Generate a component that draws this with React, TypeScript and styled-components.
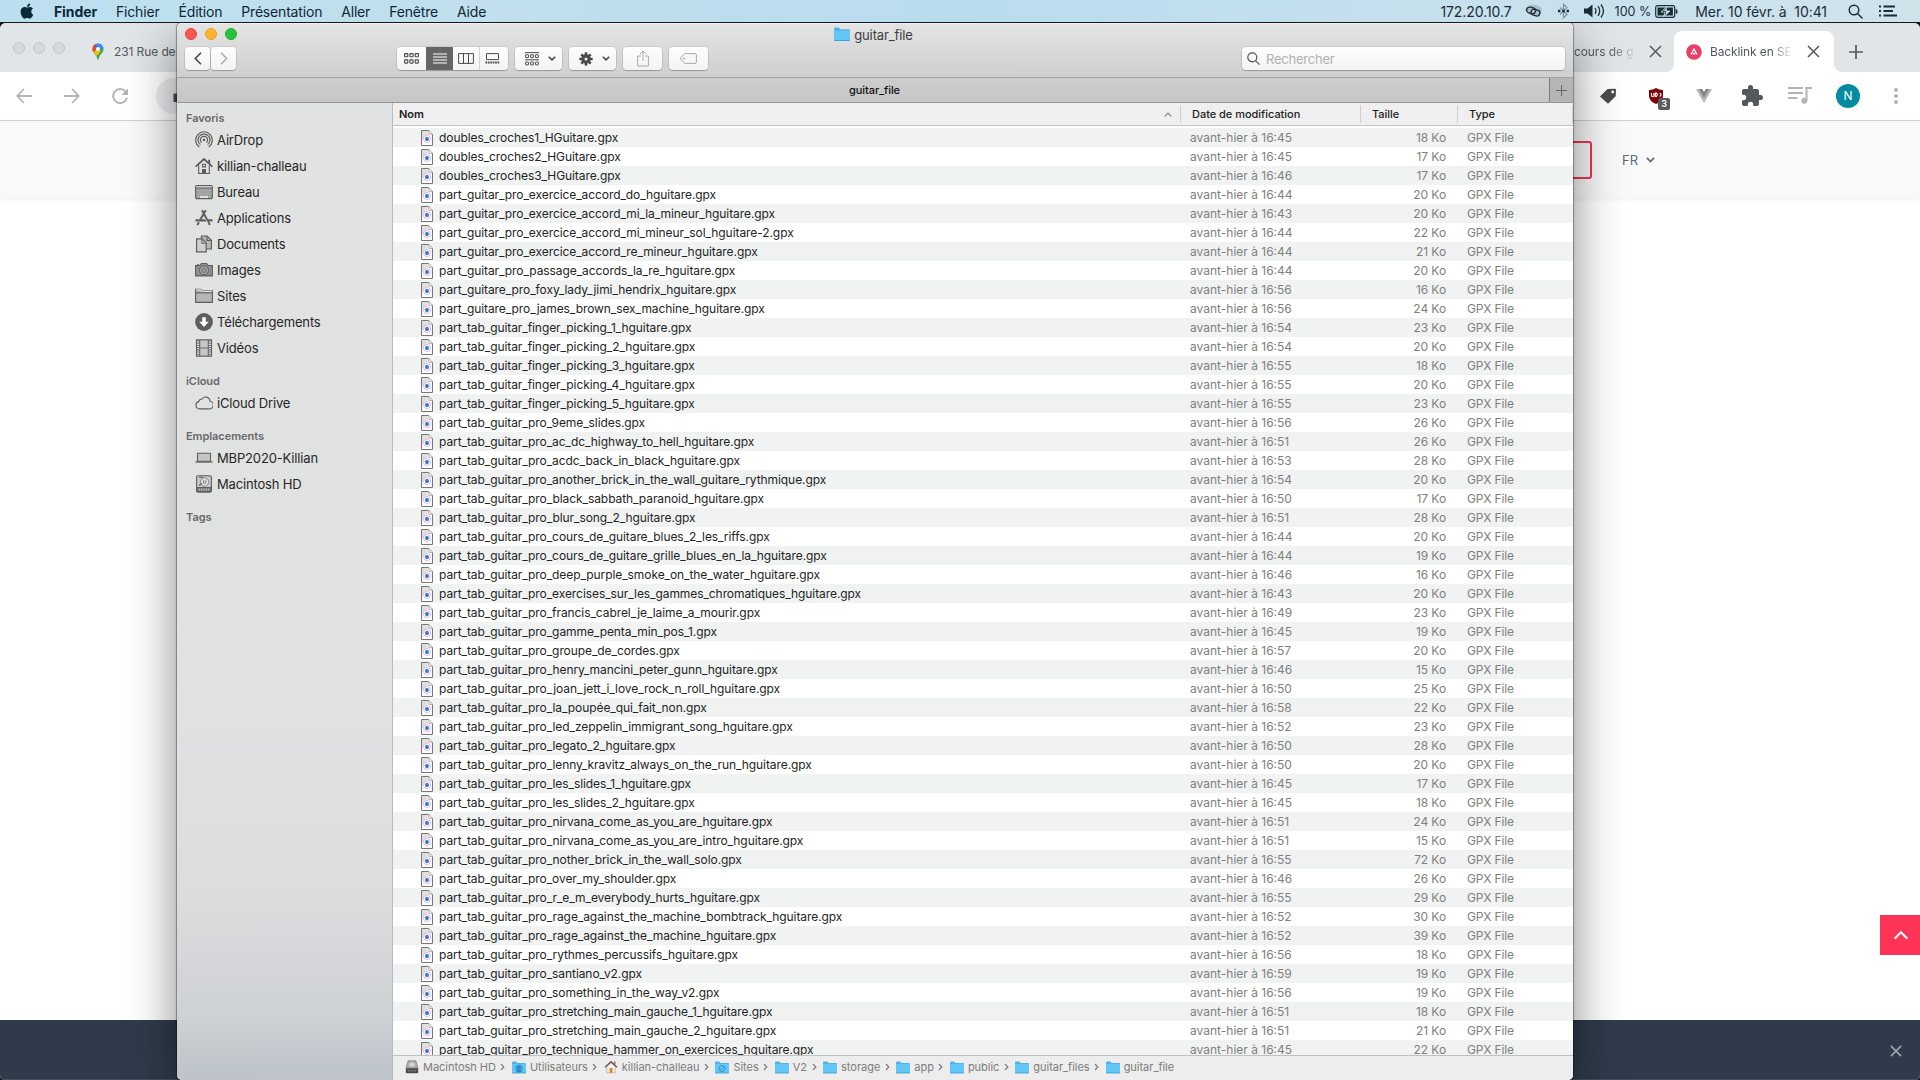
import React from "react";
import styled, { createGlobalStyle, css } from "styled-components";

const Global = createGlobalStyle`
  * { box-sizing: border-box; }
  html, body { margin: 0; padding: 0; background: #15181c; }
  body { font-family: Inter, "Liberation Sans", sans-serif; overflow: hidden; }
  svg { display: block; flex: none; }
`;

const Desktop = styled.div`
  position: relative;
  display: flex;
  flex-direction: column;
  width: 1920px;
  height: 1080px;
  overflow: hidden;
  background: #15181c;
`;

/* ---------- macOS menu bar ---------- */

const MenuBar = styled.header`
  display: flex;
  flex: none;
  align-items: center;
  justify-content: space-between;
  height: 22px;
  padding: 0 23px 0 20px;
  background: linear-gradient(90deg, #bcdfef 0%, #c1dfec 25%, #b9dcef 50%, #c6e0ed 75%, #cfe3eb 100%);
  color: #0c2836;
  font-size: 14px;
  white-space: pre;
`;

const MenuGroup = styled.div`
  display: flex;
  align-items: center;
  height: 22px;
  gap: 19px;
`;

const MenuItem = styled.span<{ $bold?: boolean }>`
  margin-left: ${(p) => (p.$bold ? 1 : 0)}px;
  font-weight: ${(p) => (p.$bold ? 700 : 400)};
  letter-spacing: ${(p) => (p.$bold ? -0.1 : -0.18)}px;
`;

const StatusGroup = styled(MenuGroup)`
  gap: 0;
  color: #1a2c36;
`;

const Status = styled.span<{ $after: number; $small?: boolean }>`
  margin-right: ${(p) => p.$after}px;
  font-size: ${(p) => (p.$small ? 12.5 : 14)}px;
  letter-spacing: ${(p) => (p.$small ? 0 : -0.07)}px;
`;

/* ---------- browser behind ---------- */

const Browser = styled.div`
  display: flex;
  flex-direction: column;
  flex: 1;
  margin-top: 1px;
  border-radius: 6px 6px 5px 5px;
  overflow: hidden;
  isolation: isolate;
  background: #fff;
`;

const TabStrip = styled.div`
  display: flex;
  flex: none;
  justify-content: space-between;
  height: 49px;
  background: #e1e5e8;
  color: #54595e;
  font-size: 12px;
`;

const TabSide = styled.div`
  display: flex;
  align-items: center;
`;

const Lights = styled.div<{ $gap: number }>`
  display: flex;
  gap: ${(p) => p.$gap}px;
`;

const Light = styled.i<{ $fill: string; $edge: string }>`
  width: 12px;
  height: 12px;
  border-radius: 50%;
  background: ${(p) => p.$fill};
  border: 1px solid ${(p) => p.$edge};
`;

const BrowserLights = styled(Lights)`
  margin: 0 27px 0 13px;
`;

const TabText = styled.span<{ $w: number; $fade?: boolean }>`
  width: ${(p) => p.$w}px;
  overflow: hidden;
  white-space: nowrap;
  padding-top: 8px;
  line-height: 20px;
  letter-spacing: -0.1px;
  ${(p) => p.$fade && css`mask-image: linear-gradient(90deg, #000 60%, transparent 103%);`}
`;

const LowIcon = styled.div<{ $l?: number; $r?: number }>`
  margin: 8px ${(p) => p.$r ?? 0}px 0 ${(p) => p.$l ?? 0}px;
`;

const ActiveTab = styled.div`
  display: flex;
  align-items: center;
  align-self: flex-end;
  width: 160px;
  height: 41px;
  padding: 0 14px 0 12px;
  border-radius: 8px 8px 0 0;
  background: #fff;
`;

const Foot = styled.div<{ $left?: boolean }>`
  align-self: flex-end;
  width: 8px;
  height: 8px;
  background: radial-gradient(circle at ${(p) => (p.$left ? "0 0" : "100% 0")}, #e1e5e8 7.6px, #fff 8.2px);
`;

const TabLabel = styled.span`
  width: 83px;
  margin: 0 15px 0 8px;
  overflow: hidden;
  white-space: nowrap;
  letter-spacing: -0.12px;
  mask-image: linear-gradient(90deg, #000 75%, transparent 101%);
`;

const NavBar = styled.div`
  display: flex;
  flex: none;
  align-items: center;
  justify-content: space-between;
  height: 49px;
  border-bottom: 1px solid #d3d5d7;
  background: #fff;
  color: #b4b4b4;
`;

const NavLeft = styled.div`
  display: flex;
  align-items: center;
  gap: 32px;
  padding-left: 16px;
`;

const AddressField = styled.div`
  display: flex;
  align-items: center;
  justify-content: flex-start;
  width: 60px;
  height: 36px;
  margin-left: -4px;
  padding-left: 17px;
  border-radius: 18px 0 0 18px;
  background: #eceef1;
`;

const Extensions = styled.div`
  display: flex;
  align-items: center;
  gap: 24px;
  padding-right: 12px;
`;

const Shield = styled.div`
  position: relative;
  width: 24px;
  height: 24px;
`;

const Badge = styled.span`
  position: absolute;
  left: 14px;
  top: 14px;
  width: 12px;
  height: 12px;
  border-radius: 2px;
  background: #5b5b5b;
  color: #fff;
  font-size: 9px;
  font-weight: 600;
  line-height: 12px;
  text-align: center;
`;

const Avatar = styled.div`
  width: 24px;
  height: 24px;
  border-radius: 50%;
  background: #058ca0;
  color: #fff;
  font-size: 12px;
  line-height: 24px;
  text-align: center;
`;

const SiteHeader = styled.div`
  position: relative;
  z-index: 1;
  display: flex;
  flex: none;
  align-items: center;
  justify-content: flex-end;
  height: 77px;
  padding: 1px 263px 0 0;
  background: #f9f9f9;
  box-shadow: 0 1px 4px rgba(0, 0, 0, 0.07);
  color: #5f6b78;
  font-size: 13px;
`;

const CallToAction = styled.div`
  width: 120px;
  height: 38px;
  margin: 0 30px 0 0;
  border: 2px solid #f03356;
  border-radius: 3px;
`;

const Language = styled.div`
  display: flex;
  align-items: center;
  gap: 8px;
  width: 35px;
`;

const Page = styled.div`
  display: flex;
  flex: 1;
  align-items: flex-end;
  justify-content: flex-end;
  padding-bottom: 65px;
  background: #fff;
`;

const ToTop = styled.div`
  display: flex;
  align-items: center;
  justify-content: center;
  width: 40px;
  height: 40px;
  padding-left: 2px;
  background: #ff3355;
  color: #fff;
`;

const CookieBar = styled.div`
  display: flex;
  flex: none;
  align-items: center;
  justify-content: flex-end;
  height: 60px;
  padding: 2px 18px 0 0;
  background: #2f3b4b;
  border-bottom: 1px solid #474f5b;
  color: #9fa5ad;
`;

/* ---------- Finder window ---------- */

const Finder = styled.section`
  position: absolute;
  left: 177px;
  top: 23px;
  display: flex;
  flex-direction: column;
  width: 1396px;
  height: 1057px;
  border-radius: 5px;
  overflow: hidden;
  background: #fff;
`;

const FinderShadow = styled.div`
  position: absolute;
  left: 177px;
  top: 0;
  width: 1396px;
  height: 1057px;
  border-radius: 5px;
  box-shadow: 0 0 1px 0.5px rgba(0, 0, 0, 0.35), 0 18px 50px rgba(0, 0, 0, 0.48);
`;

const Overlay = styled.div`
  position: absolute;
  left: 0;
  top: 23px;
  width: 1920px;
  height: 1057px;
  overflow: hidden;
`;

const Chrome = styled.div`
  flex: none;
  height: 55px;
  border-bottom: 1px solid #a3a3a3;
  background: linear-gradient(#e4e4e4, #cfcfcf);
  box-shadow: inset 0 1px 0 #f2f2f2;
`;

const TitleRow = styled.div`
  display: grid;
  grid-template-columns: 1fr auto 1fr;
  align-items: center;
  height: 22px;
  padding-left: 8px;
`;

const Title = styled.div`
  display: flex;
  align-items: center;
  gap: 4px;
  padding: 1px 11px 0 0;
  color: #3d3d3d;
  font-size: 13px;
  letter-spacing: -0.12px;
`;

const Toolbar = styled.div`
  display: flex;
  height: 26px;
  padding: 2px 8px 0;
`;

const Button = styled.div<{ $w: number; $l?: number; $dim?: boolean; $menu?: boolean }>`
  display: flex;
  align-items: center;
  justify-content: center;
  gap: 9px;
  width: ${(p) => p.$w}px;
  height: 23px;
  margin-left: ${(p) => p.$l ?? 7}px;
  padding-left: ${(p) => (p.$menu ? 4 : 0)}px;
  border-radius: 4px;
  background: linear-gradient(#fdfdfd, #f3f3f3);
  box-shadow: 0 0 0 0.5px rgba(0, 0, 0, 0.16), 0 1px 1px rgba(0, 0, 0, 0.2);
  color: ${(p) => (p.$dim ? "#a9a9a9" : "#4a4a4a")};
`;

const Segments = styled(Button)`
  gap: 0;
  overflow: hidden;
`;

const Segment = styled.div<{ $w: number; $on?: boolean; $line?: boolean }>`
  display: flex;
  align-items: center;
  justify-content: center;
  width: ${(p) => p.$w}px;
  height: 23px;
  padding-right: ${(p) => (p.$line ? 4 : 0)}px;
  background: ${(p) => (p.$on ? "#656565" : "transparent")};
  color: ${(p) => (p.$on ? "#fff" : "#4a4a4a")};
  border-left: ${(p) => (p.$line ? "1px solid #d4d4d4" : "0")};
`;

const Search = styled(Button)`
  justify-content: flex-start;
  gap: 6px;
  margin-left: auto;
  padding-left: 5px;
  color: #555;
`;

const Placeholder = styled.span`
  color: #b1b1b1;
  font-size: 13px;
  letter-spacing: -0.22px;
`;

const TabBar = styled.div`
  display: flex;
  flex: none;
  height: 25px;
  border-bottom: 1px solid #979797;
  background: linear-gradient(#cdcdcd, #c6c6c6);
`;

const FinderTab = styled.div`
  flex: 1;
  padding-left: 23px;
  color: #111;
  font-size: 11px;
  font-weight: 500;
  letter-spacing: -0.08px;
  line-height: 25px;
  text-align: center;
`;

const NewTab = styled.div`
  display: flex;
  align-items: center;
  justify-content: center;
  width: 24px;
  border-left: 1px solid #7d7d7d;
  background: #b5b5b5;
  color: #666;
`;

const Body = styled.div`
  display: flex;
  flex: 1;
  min-height: 0;
`;

const Sidebar = styled.nav`
  flex: none;
  width: 216px;
  padding-top: 6px;
  border-right: 1px solid #b9babb;
  background: linear-gradient(#e1e2e2 0%, #e0e1e1 62%, #dcdddf 80%, #cfd2d5 93%, #bec3ca 100%);
`;

const Heading = styled.div`
  height: 18px;
  padding-left: 9px;
  color: #68696a;
  font-size: 11px;
  font-weight: 600;
  letter-spacing: -0.05px;
  line-height: 18px;

  &:not(:first-child) { margin-top: 11px; }
`;

const Place = styled.div`
  display: flex;
  align-items: center;
  gap: 4px;
  height: 26px;
  padding-left: 18px;
  color: #262727;
  font-size: 13px;
  letter-spacing: -0.16px;
`;

const Content = styled.main`
  display: flex;
  flex: 1;
  flex-direction: column;
  min-width: 0;
`;

const Columns = styled.div`
  display: grid;
  flex: none;
  grid-template-columns: 788px 180px 97px 1fr;
  align-items: center;
  height: 23px;
  border-bottom: 1px solid #c3c3c3;
  background: #efefef;
  color: #232323;
  font-size: 11px;
  letter-spacing: -0.03px;
`;

const ColumnTitle = styled.div<{ $pad: number; $sorted?: boolean }>`
  display: flex;
  align-items: center;
  justify-content: space-between;
  height: 18px;
  padding: 0 8px 0 ${(p) => p.$pad}px;
  border-right: 1px solid #cfcfcf;
  font-weight: ${(p) => (p.$sorted ? 600 : 500)};

  svg { color: #8a8a8a; }
`;

const Files = styled.div`
  flex: 1;
  min-height: 0;
  padding-top: 2px;
  overflow: hidden;
`;

const FileRow = styled.div`
  display: grid;
  grid-template-columns: 797px 168px 88px 1fr;
  align-items: center;
  height: 19px;
  color: #7f8080;
  font-size: 12px;
  line-height: 19px;
  white-space: nowrap;

  &:nth-child(odd) { background: #f1f3f3; }
`;

const FileName = styled.div`
  display: flex;
  align-items: center;
  gap: 6px;
  height: 19px;
  padding-left: 28px;
  color: #232424;
  letter-spacing: -0.078px;
`;

const Size = styled.div`
  text-align: right;
  letter-spacing: -0.08px;
`;

const Kind = styled.div`
  padding-left: 21px;
  letter-spacing: -0.17px;
`;

const PathBar = styled.footer`
  display: flex;
  flex: none;
  align-items: center;
  height: 25px;
  padding: 0 0 2px 12px;
  border-top: 1px solid #c0c0c0;
  background: #ededed;
  color: #7c7c7c;
  font-size: 11px;
  letter-spacing: -0.02px;
`;

const Crumb = styled.div`
  display: flex;
  align-items: center;
  white-space: nowrap;
  > span { margin: 0 4.5px 0 4px; }
  > svg:last-child { margin-right: 6.5px; }
`;

/* ---------- drawings ---------- */

type Shape = { w: number; h: number; box?: string; sw?: number; fill?: string; children: React.ReactNode };
const Draw = ({ w, h, box, sw = 1, fill = "none", children }: Shape) => (
  <svg width={w} height={h} viewBox={box ?? `0 0 ${w} ${h}`} fill={fill} stroke={fill === "none" ? "currentColor" : "none"} strokeWidth={sw}>
    {children}
  </svg>
);

const Apple = () => (
  <Draw w={14} h={16} box="0 0 384 470" fill="#0c2836">
    <path d="M319 249c0-37 16-65 50-85-19-27-47-42-84-45-35-3-74 21-88 21-15 0-50-20-77-20C64 121 4 165 4 254c0 26 5 53 14 81 13 37 58 126 106 124 25-1 42-18 75-18 31 0 47 18 75 18 48-1 90-82 102-119-65-31-57-90-57-91zM262 85c27-32 25-62 24-73-24 1-52 16-68 35-17 20-28 44-25 71 26 2 50-11 69-33z" />
  </Draw>
);

const Cross = ({ s = 13, sw = 1.5 }: { s?: number; sw?: number }) => (
  <Draw w={s} h={s} box="0 0 13 13" sw={sw}><path d="M1 1l11 11M12 1L1 12" /></Draw>
);

const Chevron = ({ w = 8, h = 5, sw = 1.6, up }: { w?: number; h?: number; sw?: number; up?: boolean }) => (
  <Draw w={w} h={h} box="0 0 8 5" sw={sw}><path d={up ? "M.8 4.4L4 1.1l3.200 3.300" : "M.8.7L4 3.900 7.200.7"} /></Draw>
);

const MapPin = () => (
  <svg width="12" height="17" viewBox="0 0 12 17">
    <clipPath id="pin"><path d="M6 .5a5.500 5.500 0 0 1 5.500 5.500c0 4-4.200 5.500-4.800 9.600-.1 1-.3 1.200-.7 1.200s-.6-.2-.7-1.200C4.700 11.500.5 10 .5 6A5.500 5.500 0 0 1 6 .5z" /></clipPath>
    <g clipPath="url(#pin)">
      <path fill="#34a853" d="M0 0h12v17H0z" />
      <path fill="#4285f4" d="M3 0h9v5L6 7z" />
      <path fill="#1a73e8" d="M2 0l4 5-3 1L0 2z" />
      <path fill="#ea4335" d="M0 2l2-1 4 5-3.500 3.500L0 8z" />
      <path fill="#fbbc04" d="M1.500 9.500l3-3.300L9 8l-4 5z" />
    </g>
    <circle cx="6" cy="6" r="2" fill="#fff" />
  </svg>
);

const Folder = ({ w = 14, mark }: { w?: number; mark?: "user" | "site" }) => (
  <svg width={w} height={w * 13 / 14} viewBox="0 0 14 13">
    <path d="M0 1.500Q0 .5 1 .5h3.200l1.300 1.400H13q1 0 1 1V12H0z" fill="#4eb3e6" />
    <path d="M0 3h14v8.500q0 .8-.8.8H.8q-.8 0-.8-.8z" fill="#63c6f8" />
    <path d="M.3 11.900h13.400" stroke="#42a3d8" strokeWidth=".9" />
    {mark === "user" && <g fill="#2b86bd"><circle cx="7" cy="7.500" r="3.900" opacity=".6" /><circle cx="7" cy="6.300" r="1.500" /><path d="M4.300 10.200q2.700-3.400 5.400 0-2.700 2-5.400 0z" /></g>}
    {mark === "site" && <g fill="none" stroke="#3290c8"><circle cx="7" cy="7.500" r="3" /><path d="M5.500 9l3-3" /></g>}
  </svg>
);

const GpxIcon = () => (
  <svg width="12" height="16" viewBox="0 0 12 16">
    <path d="M.5.500h7.300l3.700 3.800v11.200H.5z" fill="#fcfcfc" stroke="#777" />
    <path d="M1 1h5.500v3l-3 4L1 9z" fill="#dedede" />
    <path d="M7.800.800v3.500h3.400" fill="#fff" stroke="#999" strokeWidth=".8" />
    <circle cx="6" cy="9" r="3.500" fill="#fff" stroke="#e9a6ea" strokeWidth=".9" />
    <circle cx="6" cy="9" r="1.900" fill="#1565b8" />
    <circle cx="6.300" cy="8.800" r=".9" fill="#2f9df0" />
  </svg>
);

const Grid = () => (
  <Draw w={15} h={11} sw={1.100}>
    {[0.6, 5.9, 11.2].map((x) => [0.6, 6.9].map((y) => <rect key={x + "-" + y} x={x} y={y} width="3.200" height="3.200" rx=".5" />))}
  </Draw>
);

const Gear = () => (
  <Draw w={14} h={14} box="-7 -7 14 14" fill="#4a4a4a">
    {[0, 45, 90, 135].map((a) => <rect key={a} x="-1.300" y="-6.700" width="2.600" height="13.400" rx=".4" transform={`rotate(${a})`} />)}
    <circle r="4.700" />
    <circle r="1.500" fill="#f6f6f6" />
  </Draw>
);

const g = "#5d5e5e";
const placeIcons: Record<string, React.ReactNode> = {
  AirDrop: <>
    <path d="M4.300 15.900a8.300 8.300 0 1 1 9.400 0M5.400 13.600a5.900 5.900 0 1 1 7.200 0M6.600 11.600a3.600 3.600 0 1 1 4.800 0" strokeWidth="1.200" />
    <circle cx="9" cy="9" r="1.300" fill={g} stroke="none" />
  </>,
  "killian-challeau": <>
    <path d="M.7 9.700L9 2l8.300 7.700" strokeWidth="1.800" /><path d="M3.700 8.200v8.300h10.600V8.200" /><path d="M14.200 2.800v4" strokeWidth="2" />
    <path d="M7.500 7.300h3v2.600h-3z" /><path d="M7 12h4v4.500H7z" fill={g} stroke="none" />
  </>,
  Bureau: <>
    <rect x=".6" y="2.600" width="16.800" height="13" rx="1.200" fill="#a2a4a4" /><path d="M1 3.200h16v1.600H1z" fill="#dcdddd" stroke="none" /><path d="M1 5h16" />
    <path d="M5 14h8" stroke="#f4f4f4" strokeWidth="2" strokeDasharray="1.500 .6" />
  </>,
  Applications: <>
    <path d="M7 1.200l7.900 14.800M10.800 1.200L5.300 10.500" strokeWidth="2" /><path d="M3.900 13.200l-1.500 2.900" strokeWidth="2" />
    <path d="M.5 11.300h17" strokeWidth="2.200" /><path d="M10.300 9.500l2.600 5" stroke="#e1e2e2" strokeWidth=".8" />
  </>,
  Documents: <>
    <path d="M6.500 1h5.600l4.300 4.300v8.700H6.500z" fill="#b7b8b8" strokeWidth="1.200" /><path d="M12 1.200v4.300h4" /><path d="M1.600 3.900h5.600l4 4v8.900H1.600z" fill="#d0d1d1" strokeWidth="1.200" /><path d="M7 4.200v4h4.200" />
  </>,
  Images: <>
    <path d="M.6 4.500h4.200l1.500-2h5.400l1.500 2h4.200v10.400H.6z" fill="#8d8f8f" /><circle cx="9" cy="9.300" r="4.300" fill="#d3d4d4" /><circle cx="9" cy="9.300" r="2.800" fill="#8f9191" strokeWidth=".6" /><path d="M2 3.700h2" />
  </>,
  Sites: <>
    <path d="M.6 15.400V2.200h5.200l1.300 1.700h10.300v11.500z" fill="#b4b6b6" /><path d="M1 5.800h16" /><path d="M1.200 2.800h4.300l1.300 1.600h10" stroke="#dedfdf" />
  </>,
  "Téléchargements": <>
    <circle cx="9" cy="9" r="8.900" fill={g} stroke="none" /><path d="M7.200 4.200h3.600v4.600h3L9 14 4.200 8.800h3z" fill="#fff" stroke="none" />
  </>,
  "Vidéos": <>
    <path d="M5 1.500h8v7H5zM5 9.500h8v7H5z" fill="#c6c7c7" stroke="none" /><path d="M1.500.9h15v16.200h-15zM4.700 1v16M13.300 1v16M4.500 9h9" />
    <path d="M3 1.500v15M15 1.500v15" strokeWidth="1.600" strokeDasharray="1.100 1.100" />
  </>,
  "iCloud Drive": <path d="M4.500 14.900a3.700 3.700 0 0 1-.7-7.300 2.700 2.700 0 0 1 3-2.300 4.300 4.300 0 0 1 8.100 2 3.800 3.800 0 0 1-.9 7.600z" />,
  "MBP2020-Killian": <><path d="M2.500 4.200h13v8h-13z" fill="#c4c6c6" /><path d="M.5 13h17" strokeWidth="1.300" /></>,
  "Macintosh HD": <>
    <rect x="1.600" y=".7" width="14.800" height="16.400" rx="1.500" fill="#c9caca" /><circle cx="9.500" cy="7" r="4.200" fill="#ddd" strokeWidth=".6" /><circle cx="9.500" cy="7" r="1.400" strokeWidth=".7" />
    <path d="M4 2.300h4M4 10.500l3-2" /><path d="M1.600 12.500h14.800v4H1.600z" fill="#777878" /><path d="M4 14.700h10" stroke="#c9caca" strokeWidth="2.200" strokeDasharray=".8 1" />
  </>,
};

const PlaceIcon = ({ name }: { name: string }) => (
  <svg width="18" height="18" viewBox="0 0 18 18" fill="none" stroke={g} strokeWidth="1.100">{placeIcons[name]}</svg>
);

const Disk = () => (
  <svg width="14" height="14" viewBox="0 0 14 14">
    <path d="M3 .8h8l2 7.700H1z" fill="#a7aaab" stroke="#77797a" strokeWidth=".7" /><ellipse cx="7" cy="4.500" rx="3" ry="2.200" fill="#cfd3d4" />
    <rect x=".8" y="8.300" width="12.400" height="4.900" rx=".8" fill="#4b4e50" /><path d="M3 10.800h8" stroke="#999" strokeDasharray="1 .7" />
  </svg>
);

const House = () => (
  <svg width="14" height="14" viewBox="0 0 14 14">
    <path d="M2.800 6.500L7 2.800l4.200 3.700v6.300H2.800z" fill="#f6f3ee" stroke="#999" strokeWidth=".6" /><path d="M1 7.300l6-5.500 6 5.500" fill="none" stroke="#6b5a50" strokeWidth="1.500" />
    <path d="M10 1.600h1.500v3L10 3.500z" fill="#8c6b57" /><path d="M5.500 8h3v4.800h-3z" fill="#e8821e" />
  </svg>
);

/* ---------- data ---------- */

const files: [string, string, number][] = [
  ["doubles_croches1_HGuitare", "45", 18],
  ["doubles_croches2_HGuitare", "45", 17],
  ["doubles_croches3_HGuitare", "46", 17],
  ["part_guitar_pro_exercice_accord_do_hguitare", "44", 20],
  ["part_guitar_pro_exercice_accord_mi_la_mineur_hguitare", "43", 20],
  ["part_guitar_pro_exercice_accord_mi_mineur_sol_hguitare-2", "44", 22],
  ["part_guitar_pro_exercice_accord_re_mineur_hguitare", "44", 21],
  ["part_guitar_pro_passage_accords_la_re_hguitare", "44", 20],
  ["part_guitare_pro_foxy_lady_jimi_hendrix_hguitare", "56", 16],
  ["part_guitare_pro_james_brown_sex_machine_hguitare", "56", 24],
  ["part_tab_guitar_finger_picking_1_hguitare", "54", 23],
  ["part_tab_guitar_finger_picking_2_hguitare", "54", 20],
  ["part_tab_guitar_finger_picking_3_hguitare", "55", 18],
  ["part_tab_guitar_finger_picking_4_hguitare", "55", 20],
  ["part_tab_guitar_finger_picking_5_hguitare", "55", 23],
  ["part_tab_guitar_pro_9eme_slides", "56", 26],
  ["part_tab_guitar_pro_ac_dc_highway_to_hell_hguitare", "51", 26],
  ["part_tab_guitar_pro_acdc_back_in_black_hguitare", "53", 28],
  ["part_tab_guitar_pro_another_brick_in_the_wall_guitare_rythmique", "54", 20],
  ["part_tab_guitar_pro_black_sabbath_paranoid_hguitare", "50", 17],
  ["part_tab_guitar_pro_blur_song_2_hguitare", "51", 28],
  ["part_tab_guitar_pro_cours_de_guitare_blues_2_les_riffs", "44", 20],
  ["part_tab_guitar_pro_cours_de_guitare_grille_blues_en_la_hguitare", "44", 19],
  ["part_tab_guitar_pro_deep_purple_smoke_on_the_water_hguitare", "46", 16],
  ["part_tab_guitar_pro_exercises_sur_les_gammes_chromatiques_hguitare", "43", 20],
  ["part_tab_guitar_pro_francis_cabrel_je_laime_a_mourir", "49", 23],
  ["part_tab_guitar_pro_gamme_penta_min_pos_1", "45", 19],
  ["part_tab_guitar_pro_groupe_de_cordes", "57", 20],
  ["part_tab_guitar_pro_henry_mancini_peter_gunn_hguitare", "46", 15],
  ["part_tab_guitar_pro_joan_jett_i_love_rock_n_roll_hguitare", "50", 25],
  ["part_tab_guitar_pro_la_poupée_qui_fait_non", "58", 22],
  ["part_tab_guitar_pro_led_zeppelin_immigrant_song_hguitare", "52", 23],
  ["part_tab_guitar_pro_legato_2_hguitare", "50", 28],
  ["part_tab_guitar_pro_lenny_kravitz_always_on_the_run_hguitare", "50", 20],
  ["part_tab_guitar_pro_les_slides_1_hguitare", "45", 17],
  ["part_tab_guitar_pro_les_slides_2_hguitare", "45", 18],
  ["part_tab_guitar_pro_nirvana_come_as_you_are_hguitare", "51", 24],
  ["part_tab_guitar_pro_nirvana_come_as_you_are_intro_hguitare", "51", 15],
  ["part_tab_guitar_pro_nother_brick_in_the_wall_solo", "55", 72],
  ["part_tab_guitar_pro_over_my_shoulder", "46", 26],
  ["part_tab_guitar_pro_r_e_m_everybody_hurts_hguitare", "55", 29],
  ["part_tab_guitar_pro_rage_against_the_machine_bombtrack_hguitare", "52", 30],
  ["part_tab_guitar_pro_rage_against_the_machine_hguitare", "52", 39],
  ["part_tab_guitar_pro_rythmes_percussifs_hguitare", "56", 18],
  ["part_tab_guitar_pro_santiano_v2", "59", 19],
  ["part_tab_guitar_pro_something_in_the_way_v2", "56", 19],
  ["part_tab_guitar_pro_stretching_main_gauche_1_hguitare", "51", 18],
  ["part_tab_guitar_pro_stretching_main_gauche_2_hguitare", "51", 21],
  ["part_tab_guitar_pro_technique_hammer_on_exercices_hguitare", "45", 22],
];

const places: [string, string[]][] = [
  ["Favoris", ["AirDrop", "killian-challeau", "Bureau", "Applications", "Documents", "Images", "Sites", "Téléchargements", "Vidéos"]],
  ["iCloud", ["iCloud Drive"]],
  ["Emplacements", ["MBP2020-Killian", "Macintosh HD"]],
  ["Tags", []],
];

const crumbs: [string, React.ReactNode][] = [
  ["Macintosh HD", <Disk />],
  ["Utilisateurs", <Folder mark="user" />],
  ["killian-challeau", <House />],
  ["Sites", <Folder mark="site" />],
  ["V2", <Folder />],
  ["storage", <Folder />],
  ["app", <Folder />],
  ["public", <Folder />],
  ["guitar_files", <Folder />],
  ["guitar_file", <Folder />],
];

/* ---------- screens ---------- */

const TopMenu = () => (
  <MenuBar>
    <MenuGroup>
      <Apple />
      <MenuItem $bold>Finder</MenuItem>
      {["Fichier", "Édition", "Présentation", "Aller", "Fenêtre", "Aide"].map((m) => <MenuItem key={m}>{m}</MenuItem>)}
    </MenuGroup>
    <StatusGroup>
      <Status $after={12}>172.20.10.7</Status>
      <Status $after={15}>
        <Draw w={19} h={14} sw={1.300}>
          <path d="M.5 5.500C3 2 6 .8 9.500.8S16 2 18.500 5.500L14 11H6z" fill="#a9bec8" stroke="none" />
          <rect x="2.600" y="3.400" width="9" height="6" rx="3" transform="rotate(15 7 6.400)" /><rect x="7" y="5.600" width="9" height="6" rx="3" transform="rotate(15 11.500 8.600)" />
        </Draw>
      </Status>
      <Status $after={15}>
        <Draw w={11} h={16} sw={1.200}>
          <path d="M2 4.500l7 7-3.500 3.300V1.200L9 4.500l-7 7" stroke="#7f949e" /><path d="M0 8h11" strokeWidth="2.400" strokeDasharray="2.400 1.900" />
        </Draw>
      </Status>
      <Status $after={10}>
        <Draw w={21} h={16} sw={1.300}>
          <path d="M0 5.500h3.500L8.500 1.500v13l-5-4H0z" fill="currentColor" stroke="none" />
          <path d="M11 5q2 3 0 6M14 3.200q3.400 4.800 0 9.600M17 1.500q5 6.500 0 13" />
        </Draw>
      </Status>
      <Status $after={4} $small>100 %</Status>
      <Status $after={17}>
        <Draw w={23} h={13} sw={1.200}>
          <rect x=".7" y=".7" width="19" height="11.600" rx="2" /><rect x="2.500" y="2.500" width="15.400" height="8" fill="currentColor" stroke="none" />
          <path d="M21.500 4.500v4" strokeWidth="1.800" /><path d="M12 1.500L6 7h4l-1.500 4.800L15 6h-4z" fill="#cfe3eb" stroke="#cfe3eb" strokeWidth=".8" /><path d="M11.500 3L7.500 6.500h3.300L10 9.700" strokeWidth=".8" />
        </Draw>
      </Status>
      <Status $after={21}>{"Mer. 10 févr. à  10:41"}</Status>
      <Status $after={16}>
        <Draw w={15} h={15} sw={1.400}><circle cx="6" cy="6" r="4.800" /><path d="M9.500 9.500l5 5" /></Draw>
      </Status>
      <Draw w={18} h={12} sw={2}><path d="M0 1.500h2M0 6h2M0 10.500h2M4.500 1.500H16M4.500 6H14M4.500 10.500H18" /></Draw>
    </StatusGroup>
  </MenuBar>
);

const BrowserWindow = () => (
  <Browser>
    <TabStrip>
      <TabSide>
        <BrowserLights $gap={8}>{[0, 1, 2].map((i) => <Light key={i} $fill="#d8d8d9" $edge="#c4c5c6" />)}</BrowserLights>
        <LowIcon $r={10}><MapPin /></LowIcon>
        <TabText $w={66}>231 Rue de</TabText>
      </TabSide>
      <TabSide>
        <TabText $w={61} $fade>cours de g</TabText>
        <LowIcon $l={14} $r={4}><Cross /></LowIcon>
        <Foot $left />
        <ActiveTab>
          <svg width="16" height="16" viewBox="0 0 16 16"><circle cx="8" cy="8" r="7.800" fill="#ea3e66" /><path d="M5 10.500L8 5l3 5.500M6.800 10.300l1.200-1.200 1.200 1.200" fill="none" stroke="#fff" strokeWidth="1.200" /></svg>
          <TabLabel>Backlink en SEO</TabLabel>
          <Cross />
        </ActiveTab>
        <Foot />
        <LowIcon $l={7} $r={57}><Draw w={14} h={14} sw={1.700}><path d="M7 0v14M0 7h14" /></Draw></LowIcon>
      </TabSide>
    </TabStrip>
    <NavBar>
      <NavLeft>
        <Draw w={16} h={16} sw={1.800}><path d="M16 8H1.500M8 1L1.300 8 8 15" /></Draw>
        <Draw w={16} h={16} sw={1.800}><path d="M0 8h14.500M8 1l6.700 7L8 15" /></Draw>
        <Draw w={16} h={16} sw={2}><path d="M13.600 3.600A7 7 0 1 0 15 9.600" /><path d="M16 .5V7H9.500z" fill="currentColor" stroke="none" /></Draw>
        <AddressField><Draw w={10} h={12} fill="#4b4f54"><path d="M.5 3.500h9V13h-9z" /></Draw></AddressField>
      </NavLeft>
      <Extensions>
        <Draw w={24} h={24} fill="#4c4c4c"><path d="M4 12.600L11.500 5l7.500-.3q1 0 1 1l-.3 6.600L12 19.700z" /><circle cx="16.700" cy="8" r="1.400" fill="#fff" /></Draw>
        <Shield>
          <Draw w={24} h={24} fill="#7c0408">
            <path d="M12 4q3 2 7 2v6q0 5-7 8-7-3-7-8V6q4 0 7-2z" />
            <path d="M7.500 9v3q1.200 1.500 2.400 0V9M11.300 9v3.500h1q2-1.700 0-3.500zM15.500 9.300a1.500 1.500 0 1 1 0 3" fill="none" stroke="#fff" strokeWidth="1.100" />
          </Draw>
          <Badge>3</Badge>
        </Shield>
        <Draw w={24} h={24} fill="#b4b4b4"><path d="M4 5h4.500L12 11l3.500-6H20l-8 14z" /><path d="M7 5h3.200L12 8l1.800-3H17l-5 8.700z" fill="#858585" /></Draw>
        <Draw w={24} h={24} fill="#54575c"><path d="M20.500 11H19V7c0-1.100-.9-2-2-2h-4V3.500a2.500 2.500 0 0 0-5 0V5H4c-1.100 0-2 .9-2 2v3.800h1.500a2.700 2.700 0 0 1 0 5.400H2V20c0 1.100.9 2 2 2h3.800v-1.500a2.700 2.700 0 0 1 5.400 0V22H17c1.100 0 2-.9 2-2v-4h1.500a2.500 2.500 0 0 0 0-5z" /></Draw>
        <Draw w={24} h={24} sw={2}><path d="M0 4h15M0 9h15M0 14h9.500M18.500 16.500V4H24" /><circle cx="16.300" cy="16.800" r="3" fill="currentColor" stroke="none" /></Draw>
        <Avatar>N</Avatar>
        <Draw w={24} h={24} fill="#b4b4b4"><circle cx="12" cy="6" r="2" /><circle cx="12" cy="12" r="2" /><circle cx="12" cy="18" r="2" /></Draw>
      </Extensions>
    </NavBar>
    <SiteHeader>
      <CallToAction />
      <Language>FR <Chevron w={9} h={6} /></Language>
    </SiteHeader>
    <Page>
      <ToTop><Chevron w={16} h={10} sw={1} up /></ToTop>
    </Page>
    <CookieBar><Cross s={12} sw={1.700} /></CookieBar>
  </Browser>
);

const FinderWindow = () => (
  <Finder>
    <Chrome>
      <TitleRow>
        <Lights $gap={8}>
          <Light $fill="#fc5650" $edge="#e2463f" />
          <Light $fill="#fdb42c" $edge="#e0a028" />
          <Light $fill="#27c33c" $edge="#1fac31" />
        </Lights>
        <Title><Folder w={16} />guitar_file</Title>
      </TitleRow>
      <Toolbar>
        <Button $w={25} $l={0}><Draw w={8} h={13} sw={1.600}><path d="M7 .8L1.300 6.500 7 12.200" /></Draw></Button>
        <Button $w={25} $l={1} $dim><Draw w={8} h={13} sw={1.400}><path d="M1 .8l5.700 5.700L1 12.200" /></Draw></Button>
        <Segments $w={111} $l={161}>
          <Segment $w={29}><Grid /></Segment>
          <Segment $w={27} $on><Draw w={14} h={11} sw={1.100}><path d="M0 1h14M0 4h14M0 7h14M0 10h14" /></Draw></Segment>
          <Segment $w={26}><Draw w={16} h={11}><path d="M.6.600h14.800v9.800H.6zM5.500.6v10M10.500.6v10" /></Draw></Segment>
          <Segment $w={29} $line><Draw w={15} h={11}><path d="M1.500.600h12v6h-12z" /><path d="M.5 9.500h14" strokeWidth="1.800" strokeDasharray="1.700 .7" /></Draw></Segment>
        </Segments>
        <Button $w={47} $menu>
          <Draw w={14} h={14}>
            <path d="M0 .6h14M0 7.800h14" />
            {[0.6, 5.5, 10.4].map((x) => [2.7, 10].map((y) => <rect key={x + "-" + y} x={x} y={y} width="2.900" height="2.900" rx=".4" />))}
          </Draw>
          <Chevron />
        </Button>
        <Button $w={47} $menu><Gear /><Chevron /></Button>
        <Button $w={39} $dim><Draw w={12} h={17}><path d="M4 6H.6v10h10.800V6H8M6 11V1M3 3.900L6 1l3 2.900" /></Draw></Button>
        <Button $w={39} $dim><Draw w={17} h={11}><path d="M5 .6h10q1.400 0 1.400 1.400v7q0 1.400-1.400 1.400H5L.8 6.500q-.5-1 0-2z" /><circle cx="4" cy="5.500" r=".7" /></Draw></Button>
        <Search $w={323}>
          <Draw w={13} h={13} sw={1.200}><circle cx="5.300" cy="5.300" r="4.500" /><path d="M8.600 8.600l4 4" /></Draw>
          <Placeholder>Rechercher</Placeholder>
        </Search>
      </Toolbar>
    </Chrome>
    <TabBar>
      <FinderTab>guitar_file</FinderTab>
      <NewTab><Draw w={11} h={11}><path d="M5.500 0v11M0 5.500h11" /></Draw></NewTab>
    </TabBar>
    <Body>
      <Sidebar>
        {places.map(([title, items]) => (
          <React.Fragment key={title}>
            <Heading>{title}</Heading>
            {items.map((p) => <Place key={p}><PlaceIcon name={p} />{p}</Place>)}
          </React.Fragment>
        ))}
      </Sidebar>
      <Content>
        <Columns>
          <ColumnTitle $pad={6} $sorted>Nom <Chevron w={8} h={5} sw={1.2} up /></ColumnTitle>
          <ColumnTitle $pad={11}>Date de modification</ColumnTitle>
          <ColumnTitle $pad={11}>Taille</ColumnTitle>
          <ColumnTitle $pad={11}>Type</ColumnTitle>
        </Columns>
        <Files>
          {files.map(([name, minute, size]) => (
            <FileRow key={name}>
              <FileName><GpxIcon />{name}.gpx</FileName>
              <span>avant-hier à 16:{minute}</span>
              <Size>{size} Ko</Size>
              <Kind>GPX File</Kind>
            </FileRow>
          ))}
        </Files>
        <PathBar>
          {crumbs.map(([name, icon], i) => (
            <Crumb key={name}>
              {icon}
              <span>{name}</span>
              {i < crumbs.length - 1 && <Draw w={5} h={8} sw={1.200}><path d="M1 1l2.800 3L1 7" /></Draw>}
            </Crumb>
          ))}
        </PathBar>
      </Content>
    </Body>
  </Finder>
);

export default function App() {
  return (
    <Desktop>
      <Global />
      <TopMenu />
      <BrowserWindow />
      <Overlay><FinderShadow /></Overlay>
      <FinderWindow />
    </Desktop>
  );
}
